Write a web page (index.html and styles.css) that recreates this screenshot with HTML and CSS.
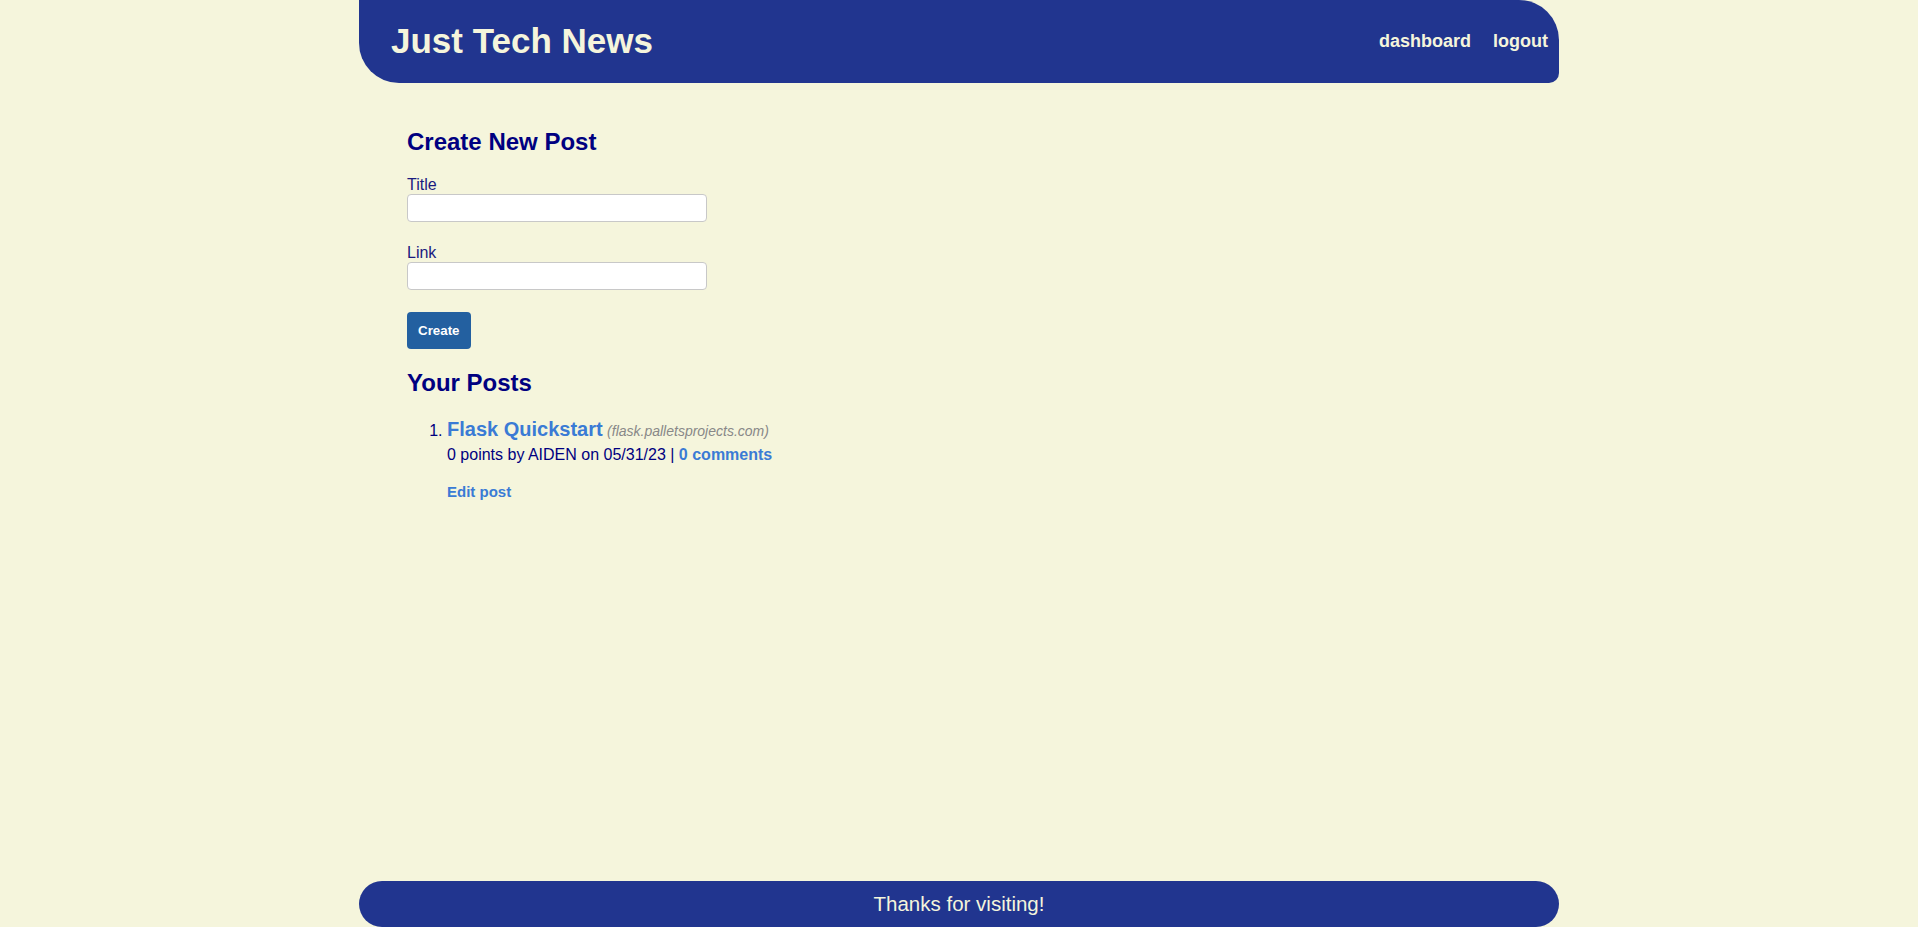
FILE: index.html
```html
<!DOCTYPE html>
<html lang="en">
<head>
<meta charset="utf-8">
<title>Just Tech News</title>
<link rel="stylesheet" href="styles.css">
</head>
<body>
<div class="page">
  <header class="site-header">
    <h1 class="site-title">Just Tech News</h1>
    <nav class="site-nav">
      <a href="#" class="nav-link">dashboard</a>
      <a href="#" class="nav-link">logout</a>
    </nav>
  </header>

  <main class="main">
    <h2 class="section-title first">Create New Post</h2>
    <form class="post-form">
      <div class="field">
        <label class="field-label" for="title">Title</label>
        <input class="field-input" id="title" type="text">
      </div>
      <div class="field">
        <label class="field-label" for="link">Link</label>
        <input class="field-input" id="link" type="text">
      </div>
      <button class="btn" type="button">Create</button>
    </form>

    <h2 class="section-title">Your Posts</h2>
    <ol class="post-list">
      <li class="post">
        <div class="post-title-line"><a href="#" class="post-title">Flask Quickstart</a> <span class="post-domain">(flask.palletsprojects.com)</span></div>
        <div class="post-meta">0 points by AIDEN on 05/31/23 | <a href="#" class="post-comments">0 comments</a></div>
        <div class="post-edit"><a href="#" class="edit-link">Edit post</a></div>
      </li>
    </ol>
  </main>

  <footer class="site-footer">Thanks for visiting!</footer>
</div>
</body>
</html>
```

FILE: styles.css
```css
html, body {
  margin: 0;
  padding: 0;
}

body {
  background: #f5f5dc;
  font-family: "Liberation Sans", Arial, sans-serif;
  color: #000080;
}

.page {
  width: 1200px;
  margin: 0 auto;
  min-height: 100vh;
  display: flex;
  flex-direction: column;
}

.site-header {
  height: 83px;
  background: #21358f;
  border-radius: 0 40px 10px 40px;
  display: flex;
  justify-content: space-between;
  align-items: flex-start;
  padding: 0 11px 0 32px;
  box-sizing: border-box;
}

.site-title {
  margin: 21px 0 0 0;
  font-size: 35px;
  line-height: 40px;
  font-weight: bold;
  color: #f5f5dc;
}

.site-nav {
  margin-top: 31px;
  display: flex;
  gap: 22px;
}

.nav-link {
  font-size: 18px;
  line-height: 20px;
  font-weight: bold;
  color: #f5f5dc;
  text-decoration: none;
}

.main {
  flex: 1;
  padding: 0 48px;
}

.section-title {
  margin: 20px 0 0 0;
  font-size: 24px;
  line-height: 28px;
  font-weight: bold;
  color: #000080;
}

.section-title.first {
  margin-top: 45px;
}

.post-form {
  margin: 0;
}

.field {
  margin-top: 20px;
}

.field + .field {
  margin-top: 22px;
}

.field-label {
  display: block;
  font-size: 16px;
  line-height: 18px;
  color: #1a1a80;
}

.field-input {
  display: block;
  width: 300px;
  height: 28px;
  box-sizing: border-box;
  border: 1px solid #c8c8c8;
  border-radius: 4px;
  background: #fff;
  margin: 0;
}

.btn {
  display: block;
  margin-top: 22px;
  height: 37px;
  padding: 0 11px;
  background: #2360a0;
  color: #fff;
  border: none;
  border-radius: 4px;
  font-family: "Liberation Sans", Arial, sans-serif;
  font-size: 13.33px;
  font-weight: bold;
}

.post-list {
  margin: 21px 0 0 0;
  padding-left: 40px;
  color: #000080;
}

.post {
  font-size: 16px;
}

.post-title-line {
  line-height: 23px;
}

.post-title {
  font-size: 20px;
  font-weight: bold;
  color: #3a7bd5;
  text-decoration: none;
}

.post-domain {
  font-size: 14px;
  font-style: italic;
  color: #888888;
}

.post-meta {
  margin-top: 3px;
  font-size: 16px;
  line-height: 18px;
  color: #000080;
}

.post-comments {
  font-weight: bold;
  color: #3a7bd5;
  text-decoration: none;
}

.post-edit {
  margin-top: 19px;
  line-height: 17px;
}

.edit-link {
  font-size: 15px;
  font-weight: bold;
  color: #3a7bd5;
  text-decoration: none;
}

.site-footer {
  height: 46px;
  line-height: 46px;
  background: #21358f;
  border-radius: 24px;
  text-align: center;
  font-size: 20.5px;
  color: #f5f5dc;
}
```
